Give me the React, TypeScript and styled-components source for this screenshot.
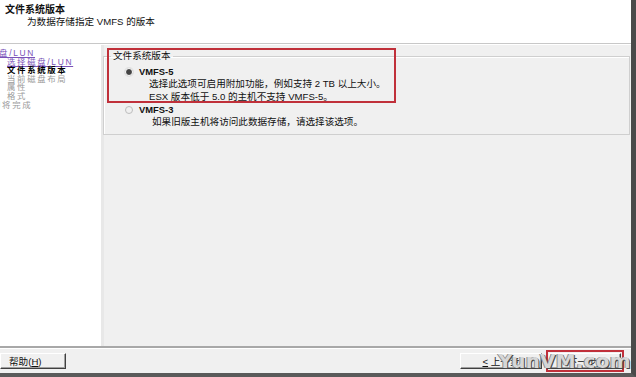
import * as React from 'react';
import styled, { createGlobalStyle } from 'styled-components';

const GlobalStyle = createGlobalStyle`
  html, body {
    margin: 0;
    padding: 0;
    background: #f0f0f0;
  }
`

const FONT = `"Liberation Sans", "Noto Sans CJK SC", sans-serif`

const Window = styled.div`
  position: relative;
  width: 631px;
  height: 373px;
  overflow: hidden;
  display: flex;
  flex-direction: column;
  background: #f0f0f0;
  border-right: 5px solid #4a4a4a;
  border-bottom: 4px solid #5a5a5a;
  font-family: ${FONT};
  font-size: 9.6px;
  color: #111;
`

const Header = styled.div`
  height: 44px;
  background: #fff;
  padding: 4px 0 0 5px;
  box-sizing: border-box;
  border-bottom: 1px solid #c8c8c8;
`

const Title = styled.div`
  font-weight: bold;
  font-size: 10px;
  line-height: 12px;
`

const Subtitle = styled.div`
  padding-left: 22px;
  line-height: 11px;
`

const Body = styled.div`
  flex: 1;
  display: flex;
  border-top: 1px solid #fff;
`

const Nav = styled.div`
  width: 104px;
  background: #fff;
  padding-top: 4px;
  box-sizing: border-box;
  border-right: 3px solid #e8e8e8;
  overflow: hidden;
`

// the reference is squeezed vertically: smaller glyphs, wider tracking
const NavItem = styled.div<{ $kind: 'link' | 'current' | 'todo'; $indent: number }>`
  line-height: 8.6px;
  height: 8.6px;
  font-size: 8.4px;
  letter-spacing: 1.7px;
  white-space: nowrap;
  margin-left: ${p => p.$indent}px;
  color: ${p => (p.$kind === 'link' ? '#7a52b8' : p.$kind === 'current' ? '#000' : '#9a9a9a')};
  font-weight: ${p => (p.$kind === 'current' ? 'bold' : 'normal')};
  text-decoration: ${p => (p.$kind === 'link' ? 'underline' : 'none')};
`

const Main = styled.div`
  flex: 1;
  padding: 6px 1px 0 0;
  margin-left: -1px;
`

const Group = styled.fieldset`
  margin: 0;
  padding: 4px 0 0 0;
  border: 1px solid #cfcfcf;
  box-shadow: inset 1px 1px 0 #fff;
  height: 84px;
  box-sizing: border-box;
`

const Legend = styled.legend`
  padding: 0 2px;
  margin-left: 7px;
  line-height: 10px;
`

const Option = styled.div`
  display: flex;
  align-items: center;
  gap: 6px;
  margin-left: 21px;
  height: 13px;
`

const Radio = styled.span<{ $on?: boolean }>`
  width: 6px;
  height: 6px;
  border-radius: 50%;
  border: 1px solid ${p => (p.$on ? '#fff' : '#bdbdbd')};
  background: ${p => (p.$on ? '#444' : 'transparent')};
  box-shadow: ${p => (p.$on ? '0 0 0 1px #e0e0e0' : 'none')};
`

const OptionName = styled.span`
  font-weight: bold;
  font-size: 9.4px;
`

const Desc = styled.div<{ $indent: number }>`
  margin-left: ${p => p.$indent}px;
  line-height: 12.5px;
`

const Footer = styled.div`
  height: 27px;
  display: flex;
  align-items: center;
  border-top: 2px solid #a8a8a8;
  box-shadow: inset 0 1px 0 #fff;
  padding-top: 1px;
  box-sizing: border-box;
`

const Button = styled.div<{ $w: number }>`
  width: ${p => p.$w}px;
  height: 16px;
  box-sizing: border-box;
  display: flex;
  align-items: center;
  justify-content: center;
  background: #f0f0f0;
  border: 1px solid #fff;
  border-right-color: #404040;
  border-bottom-color: #404040;
  box-shadow: inset -1px -1px 0 #a0a0a0;
`

const HelpButton = styled(Button)`
  justify-content: flex-start;
  padding-left: 8px;
  margin-right: auto;
`

const NextWrap = styled.div`
  margin: 0 7px 0 4px;
  border: 2px solid #c0303a;
  padding: 1px;
`

const Mnemonic = styled.span`
  text-decoration: underline;
`

const Annotation = styled.div`
  position: absolute;
  left: 107px;
  top: 48px;
  width: 289px;
  height: 55px;
  border: 2px solid #c0303a;
  box-sizing: border-box;
  pointer-events: none;
`

const Watermark = styled.div`
  position: absolute;
  left: 498px;
  top: 349px;
  font-family: "DejaVu Sans", sans-serif;
  font-weight: bold;
  font-size: 20px;
  letter-spacing: 0.2px;
  color: #d6d6d6;
  text-shadow: 1px 1px 0 #4a4a4a, -1px 0 0 #8a8a8a;
  white-space: nowrap;
`

const steps: { label: string; kind: 'link' | 'current' | 'todo'; indent: number }[] = [
  { label: '磁盘/LUN', kind: 'link', indent: -11 },
  { label: '选择磁盘/LUN', kind: 'link', indent: 7 },
  { label: '文件系统版本', kind: 'current', indent: 7 },
  { label: '当前磁盘布局', kind: 'todo', indent: 7 },
  { label: '属性', kind: 'todo', indent: 7 },
  { label: '格式', kind: 'todo', indent: 7 },
  { label: '即将完成', kind: 'todo', indent: -8 },
]

export default function App() {
  return (
    <>
      <GlobalStyle />
      <Window>
        <Header>
          <Title>文件系统版本</Title>
          <Subtitle>为数据存储指定 VMFS 的版本</Subtitle>
        </Header>
        <Body>
          <Nav>
            {steps.map(s => (
              <NavItem key={s.label} $kind={s.kind} $indent={s.indent}>{s.label}</NavItem>
            ))}
          </Nav>
          <Main>
            <Group>
              <Legend>文件系统版本</Legend>
              <Option>
                <Radio $on />
                <OptionName>VMFS-5</OptionName>
              </Option>
              <Desc $indent={45}>选择此选项可启用附加功能，例如支持 2 TB 以上大小。</Desc>
              <Desc $indent={45}>ESX 版本低于 5.0 的主机不支持 VMFS-5。</Desc>
              <Option>
                <Radio />
                <OptionName>VMFS-3</OptionName>
              </Option>
              <Desc $indent={48}>如果旧版主机将访问此数据存储，请选择该选项。</Desc>
            </Group>
          </Main>
        </Body>
        <Footer>
          <HelpButton $w={66}>帮助(<Mnemonic>H</Mnemonic>)</HelpButton>
          <Button $w={82}><Mnemonic>&lt;</Mnemonic>&nbsp;上一步</Button>
          <NextWrap>
            <Button $w={72}>下一步 <Mnemonic>&gt;</Mnemonic></Button>
          </NextWrap>
        </Footer>
        <Annotation />
        <Watermark>YunVM.com</Watermark>
      </Window>
    </>
  )
}
